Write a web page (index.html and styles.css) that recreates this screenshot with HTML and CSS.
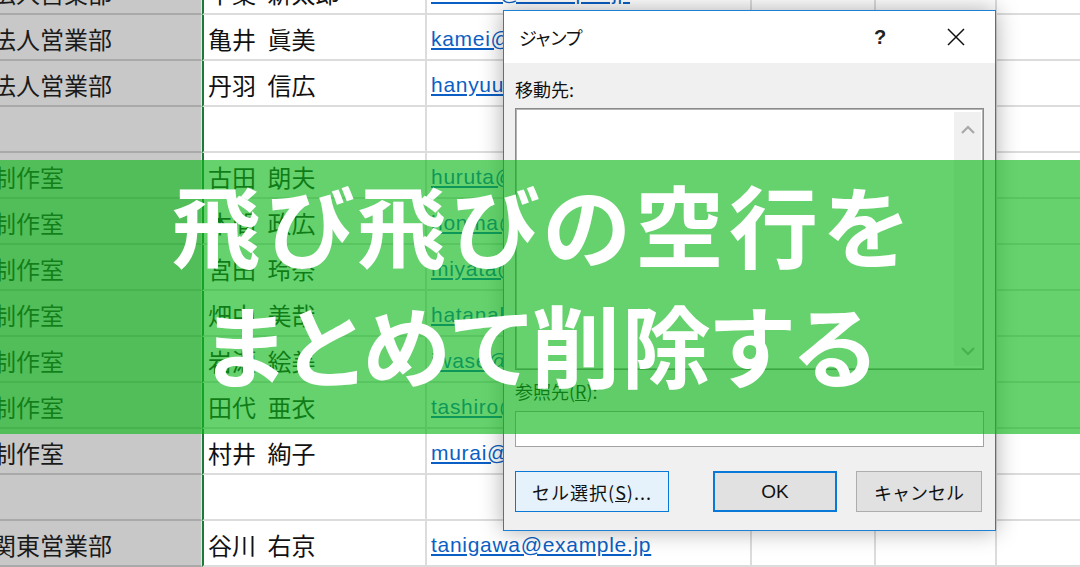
FILE: index.html
```html
<!DOCTYPE html>
<html lang="ja">
<head>
  <meta charset="UTF-8">
  <meta name="viewport" content="width=device-width, initial-scale=1.0">
  <title>飛び飛びの空行をまとめて削除する</title>
  <link rel="stylesheet" href="styles.css">
</head>
<body>
  <!-- spreadsheet behind the dialog -->
  <div class="sheet">
    <div class="row">
      <div class="cell dept">法人営業部</div>
      <div class="cell name">千葉 新太郎</div>
      <div class="cell mail"><a href="#">karube@example.jp</a></div>
      <div class="cell"></div><div class="cell"></div><div class="cell"></div>
    </div>
    <div class="row">
      <div class="cell dept">法人営業部</div>
      <div class="cell name">亀井 眞美</div>
      <div class="cell mail"><a href="#">kamei@example.jp</a></div>
      <div class="cell"></div><div class="cell"></div><div class="cell"></div>
    </div>
    <div class="row">
      <div class="cell dept">法人営業部</div>
      <div class="cell name">丹羽 信広</div>
      <div class="cell mail"><a href="#">hanyuu@example.jp</a></div>
      <div class="cell"></div><div class="cell"></div><div class="cell"></div>
    </div>
    <div class="row">
      <div class="cell dept"></div>
      <div class="cell name"></div>
      <div class="cell mail"></div>
      <div class="cell"></div><div class="cell"></div><div class="cell"></div>
    </div>
    <div class="row">
      <div class="cell dept">制作室</div>
      <div class="cell name">古田 朗夫</div>
      <div class="cell mail"><a href="#">huruta@example.jp</a></div>
      <div class="cell"></div><div class="cell"></div><div class="cell"></div>
    </div>
    <div class="row">
      <div class="cell dept">制作室</div>
      <div class="cell name">本間 政広</div>
      <div class="cell mail"><a href="#">honma@example.jp</a></div>
      <div class="cell"></div><div class="cell"></div><div class="cell"></div>
    </div>
    <div class="row">
      <div class="cell dept">制作室</div>
      <div class="cell name">宮田 玲奈</div>
      <div class="cell mail"><a href="#">miyata@example.jp</a></div>
      <div class="cell"></div><div class="cell"></div><div class="cell"></div>
    </div>
    <div class="row">
      <div class="cell dept">制作室</div>
      <div class="cell name">畑中 美哉</div>
      <div class="cell mail"><a href="#">hatanaka@example.jp</a></div>
      <div class="cell"></div><div class="cell"></div><div class="cell"></div>
    </div>
    <div class="row">
      <div class="cell dept">制作室</div>
      <div class="cell name">岩瀬 絵美</div>
      <div class="cell mail"><a href="#">iwase@example.jp</a></div>
      <div class="cell"></div><div class="cell"></div><div class="cell"></div>
    </div>
    <div class="row">
      <div class="cell dept">制作室</div>
      <div class="cell name">田代 亜衣</div>
      <div class="cell mail"><a href="#">tashiro@example.jp</a></div>
      <div class="cell"></div><div class="cell"></div><div class="cell"></div>
    </div>
    <div class="row">
      <div class="cell dept">制作室</div>
      <div class="cell name">村井 絢子</div>
      <div class="cell mail"><a href="#">murai@example.jp</a></div>
      <div class="cell"></div><div class="cell"></div><div class="cell"></div>
    </div>
    <div class="row">
      <div class="cell dept"></div>
      <div class="cell name"></div>
      <div class="cell mail"></div>
      <div class="cell"></div><div class="cell"></div><div class="cell"></div>
    </div>
    <div class="row">
      <div class="cell dept">関東営業部</div>
      <div class="cell name">谷川 右京</div>
      <div class="cell mail"><a href="#">tanigawa@example.jp</a></div>
      <div class="cell"></div><div class="cell"></div><div class="cell"></div>
    </div>
  </div>

  <!-- jump dialog -->
  <div class="dialog">
    <div class="titlebar">
      <span class="title">ジャンプ</span>
      <span class="help">?</span>
      <svg class="close" width="20" height="20" viewBox="0 0 20 20">
        <path d="M2 2 L18 18 M18 2 L2 18" stroke="#111" stroke-width="1.5" fill="none"/>
      </svg>
    </div>
    <div class="dialog-body">
      <div class="label">移動先:</div>
      <div class="listbox">
        <div class="scrollbar">
          <svg width="14" height="9" viewBox="0 0 14 9">
            <path d="M1 8 L7 2 L13 8" stroke="#a8a8a8" stroke-width="2.2" fill="none"/>
          </svg>
          <svg width="14" height="9" viewBox="0 0 14 9">
            <path d="M1 1 L7 7 L13 1" stroke="#a8a8a8" stroke-width="2.2" fill="none"/>
          </svg>
        </div>
      </div>
      <div class="label ref-label">参照先(<u>R</u>):</div>
      <div class="refbox"></div>
      <div class="buttons">
        <button class="btn btn-special">セル選択(<u>S</u>)...</button>
        <button class="btn btn-ok">OK</button>
        <button class="btn btn-cancel">キャンセル</button>
      </div>
    </div>
  </div>

  <!-- title band -->
  <div class="band">
    <p>飛び飛びの空行を</p>
    <p class="tight">まとめて削除する</p>
  </div>
</body>
</html>
```

FILE: styles.css
```css
* {
  margin: 0;
  padding: 0;
  box-sizing: border-box;
}

html, body {
  width: 1080px;
  height: 567px;
  overflow: hidden;
}

body {
  position: relative;
  background: #fff;
  font-family: "Noto Sans CJK JP", "Noto Sans", sans-serif;
  color: #111;
}

/* ---- sheet ---- */

.sheet {
  margin-top: -31px;
  margin-left: -20px;
}

.row {
  display: grid;
  grid-template-columns: 222px 225px 325px 124px 121px 200px;
  height: 46px;
}

.cell {
  display: flex;
  align-items: center;
  padding-top: 3px;
  border-bottom: 2px solid #dcdcdc;
  border-right: 2px solid #dcdcdc;
  font-size: 24px;
  white-space: nowrap;
  overflow: hidden;
}

.dept {
  background: #c8c8c8;
  border-bottom-color: #a9a9a9;
  border-right: 1px solid #e6e6e6;
  padding-left: 12px;
  color: #1a1a1a;
}

.name {
  border-left: 2px solid #1d7a37;
  padding-left: 4px;
  word-spacing: 6px;
}

.mail {
  padding-left: 4px;
}

.mail a {
  font-family: "Liberation Sans", Arial, sans-serif;
  font-size: 21px;
  letter-spacing: 0.7px;
  color: #0b5fc4;
  text-decoration: underline;
  text-underline-offset: 2px;
}

/* ---- dialog ---- */

.dialog {
  position: absolute;
  left: 503px;
  top: 10px;
  width: 493px;
  height: 521px;
  border: 1px solid #1c80d6;
  background: #f0f0f0;
  box-shadow: 0 0 22px rgba(0, 0, 0, 0.32);
  z-index: 1;
  font-feature-settings: "palt";
}

.titlebar {
  display: flex;
  align-items: center;
  height: 52px;
  background: #fff;
  padding: 0 29px 0 15px;
}

.title {
  flex: 1;
  font-size: 18px;
  color: #111;
}

.help {
  width: 12px;
  margin-right: 60px;
  font-family: "Liberation Sans", Arial, sans-serif;
  font-size: 20px;
  font-weight: bold;
  color: #222;
}

.dialog-body {
  padding: 14px 11px 17px 11px;
}

.label {
  font-size: 18px;
  line-height: 24px;
  color: #111;
}

.listbox {
  margin-top: 7px;
  height: 262px;
  background: #fff;
  border: 1px solid #8a8a8a;
  box-shadow: inset 1px 1px 0 #b4b4b4, inset -1px -1px 0 #b4b4b4;
  display: flex;
  justify-content: flex-end;
  padding: 3px 2px;
}

.scrollbar {
  width: 27px;
  background: #f0f0f0;
  display: flex;
  flex-direction: column;
  justify-content: space-between;
  align-items: center;
  padding: 13px 0 10px;
}

.ref-label {
  margin-top: 9px;
}

.refbox {
  margin-top: 8px;
  height: 36px;
  background: #fff;
  border: 1px solid #a2a2a2;
}

.buttons {
  display: flex;
  margin-top: 24px;
  height: 41px;
}

.btn {
  font-family: "Noto Sans CJK JP", sans-serif;
  font-size: 18px;
  color: #111;
  background: #e1e1e1;
  border: 1px solid #adadad;
}

.btn-special {
  width: 154px;
  background: #e5f1fb;
  border-color: #0a78d6;
  letter-spacing: 1px;
}

.btn-ok {
  width: 124px;
  margin-left: 44px;
  border: 2px solid #0a78d6;
  font-family: "Liberation Sans", Arial, sans-serif;
  font-size: 19px;
}

.btn-cancel {
  width: 126px;
  margin-left: 19px;
}

/* ---- headline band ---- */

.band {
  position: absolute;
  left: 0;
  top: 160px;
  width: 1080px;
  height: 274px;
  padding-top: 3px;
  padding-left: 5px;
  background: rgba(16, 184, 28, 0.64);
  z-index: 2;
  color: #fff;
  text-align: center;
  font-family: "Noto Sans CJK JP", sans-serif;
  font-weight: 700;
  font-size: 89px;
  line-height: 120px;
  letter-spacing: 5px;
  font-feature-settings: "palt";
}

.band .tight {
  letter-spacing: 1.5px;
  padding-right: 3px;
}
```
